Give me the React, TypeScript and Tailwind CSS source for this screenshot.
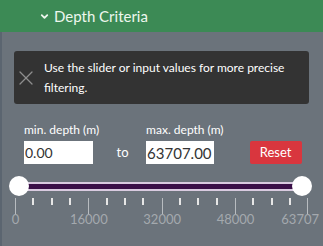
import { ChevronDown, X } from 'lucide-react'

const minorTicks = Array.from({ length: 16 }, (_, i) => (i + 1) * 4000).filter(
  v => v % 16000 !== 0 && v < 63707
)
const majorTicks = [0, 16000, 32000, 48000]

function pos(v: number) {
  return 15 + (v / 63707) * 292
}

export default function App() {
  return (
    <div
      className="w-[323px] h-[246px] overflow-hidden bg-[#6b737b]"
      style={{ fontFamily: 'Lato, "Open Sans", sans-serif' }}
    >
      {/* Header */}
      <div className="h-[32px] bg-[#3c8a55] flex items-center pl-[39px] gap-[4px] text-[#eef7ee]">
        <ChevronDown className="w-[11px] h-[11px]" strokeWidth={4} />
        <span className="text-[15px] leading-none">Depth Criteria</span>
      </div>

      <div className="border-l-2 border-[#5b6570] h-[214px] pl-[12px] pr-[14px] pt-[19px]">
        {/* Info box */}
        <div className="h-[53px] bg-[#333333] rounded-[3px] flex items-center pr-[10px] gap-[6px]">
          <X className="w-[24px] h-[24px] text-[#8e8e8e] shrink-0" strokeWidth={1.3} />
          <p className="text-white text-[12px] leading-[20px]">
            Use the slider or input values for more precise filtering.
          </p>
        </div>

        {/* Inputs */}
        <div className="flex items-end mt-[18px] pl-[10px]">
          <div className="flex flex-col">
            <label className="text-white text-[12px] leading-[16px] mb-[3px] whitespace-nowrap">
              min. depth (m)
            </label>
            <input
              readOnly
              value="0.00"
              className="w-[69px] h-[23px] bg-white text-[#333] text-[14px] px-[1px] outline-none"
            />
          </div>
          <span className="text-white text-[13px] w-[47px] text-center leading-[23px]">to</span>
          <div className="flex flex-col">
            <label className="text-white text-[12px] leading-[16px] mb-[3px] whitespace-nowrap">
              max. depth (m)
            </label>
            <input
              readOnly
              value="63707.00"
              className="w-[68px] h-[23px] bg-white text-[#333] text-[15px] px-[1px] outline-none"
            />
          </div>
          <button className="ml-[26px] w-[52px] h-[23px] bg-[#d9363e] text-white text-[13px] rounded-[2px]">
            Reset
          </button>
        </div>
      </div>

      {/* Slider (overlays body bottom) */}
      <div className="relative -mt-[70px] h-[70px]">
        <div className="absolute left-[19px] right-[21px] top-[6px] h-[9px] bg-[#3a1048] border-y-2 border-[#d9cbe0]" />
        <div className="absolute left-[9px] top-[0px] w-[20px] h-[20px] rounded-full bg-white" />
        <div className="absolute left-[292px] top-[0px] w-[20px] h-[20px] rounded-full bg-white" />
        {minorTicks.map(v => (
          <div
            key={v}
            className="absolute top-[22px] w-[2px] h-[7px] bg-[#e6e6e6]"
            style={{ left: pos(v) - 1 }}
          />
        ))}
        {majorTicks.map(v => (
          <div key={v}>
            <div
              className="absolute top-[22px] w-[1px] h-[16px] bg-[#b8bcc0]"
              style={{ left: pos(v) }}
            />
            <span
              className="absolute top-[37px] -translate-x-1/2 text-[13px] text-[#a4a9ae] leading-none"
              style={{ left: pos(v) + 0.5 }}
            >
              {v}
            </span>
          </div>
        ))}
        <div className="absolute top-[22px] left-[307px] w-[1px] h-[16px] bg-[#b8bcc0]" />
        <span className="absolute top-[37px] right-[4px] text-[13px] text-[#a4a9ae] leading-none">
          63707
        </span>
      </div>
    </div>
  )
}
